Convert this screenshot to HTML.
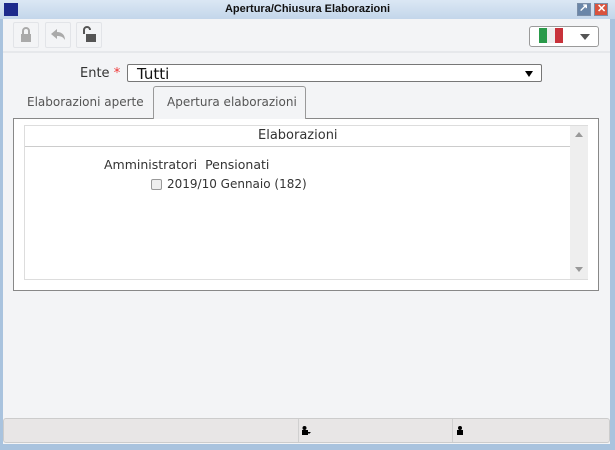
<!DOCTYPE html>
<html><head><meta charset="utf-8"><style>
*{margin:0;padding:0;box-sizing:border-box}
body{width:615px;height:450px;overflow:hidden;background:#a9c3de;font-family:"Liberation Sans","DejaVu Sans",sans-serif;position:relative}
.title{position:absolute;left:0;top:0;width:615px;height:19px;background:linear-gradient(#dbe7f4,#c3d6ea);font:bold 11px "Liberation Sans",sans-serif;color:#111;text-align:center;line-height:19px}
.logo{position:absolute;left:4px;top:3px;width:14px;height:13px;background:#1d2a8c}
.tb{position:absolute;top:3px;width:14px;height:13px;border:1px solid #7a8ea8}
.content{position:absolute;left:3px;top:19px;width:607px;height:425px;background:#f3f4f6}
.btn{position:absolute;top:3px;width:26px;height:26px;border:1px solid #e2e4e8;border-radius:2px;background:#f3f4f6}
.sep{position:absolute;left:0;top:32px;width:607px;height:2px;background:#e6e8eb}
.flag{position:absolute;left:526px;top:7px;width:70px;height:21px;border:1px solid #9a9a9a;border-radius:3px;background:#fff}
.txt{font-family:"DejaVu Sans","Liberation Sans",sans-serif;color:#333}
</style></head><body>
<div class="title"><div class="logo"></div>Apertura/Chiusura Elaborazioni
<div class="tb" style="left:577px;background:#6a86a8"></div>
<div class="tb" style="left:594px;background:#d9533e"></div>
<span style="position:absolute;left:579px;top:-1px;color:#fff;font-size:11px">↗</span>
<span style="position:absolute;left:597px;top:0;color:#fff;font-size:11px">✕</span>
</div>
<div class="content">
 <div class="btn" style="left:10px"><svg width="24" height="24"><rect x="7" y="11" width="10" height="8" fill="#aaa"/><path d="M9 11V8a3 3 0 0 1 6 0v3" stroke="#aaa" stroke-width="2" fill="none"/></svg></div>
 <div class="btn" style="left:42px"><svg width="24" height="24"><path d="M5 11l6-5v3c5 0 8 3 8 8c-2-3-4-4-8-4v3z" fill="#aaa"/></svg></div>
 <div class="btn" style="left:73px"><svg width="24" height="24"><rect x="9" y="11" width="10" height="8" fill="#555"/><path d="M7 11V7a3 3 0 0 1 6 0" stroke="#555" stroke-width="2" fill="none"/></svg></div>
 <div class="flag"><div style="position:absolute;left:9px;top:1px;width:8px;height:15px;background:#2a9a4a"></div><div style="position:absolute;left:17px;top:1px;width:8px;height:15px;background:#eee"></div><div style="position:absolute;left:25px;top:1px;width:8px;height:15px;background:#c8323a"></div><div style="position:absolute;left:50px;top:7px;border:5px solid transparent;border-top:6px solid #555;border-bottom:0"></div></div>
 <div class="sep"></div>
 <div class="txt" style="position:absolute;left:77px;top:47px;font-size:13px">Ente <span style="color:#e33">*</span></div>
 <div style="position:absolute;left:124px;top:45px;width:415px;height:18px;border:1px solid #777;border-radius:2px;background:#fff"><span class="txt" style="position:absolute;left:9px;top:0;font-size:15px;color:#111">Tutti</span><div style="position:absolute;left:397px;top:6px;border:4px solid transparent;border-top:6px solid #000;border-bottom:0"></div></div>
 <div class="txt" style="position:absolute;left:24px;top:76px;font-size:12px;color:#555">Elaborazioni aperte</div>
 <div style="position:absolute;left:150px;top:67px;width:153px;height:33px;border:1px solid #999;border-bottom:none;border-radius:3px 3px 0 0;background:#f3f4f6;z-index:2"><span class="txt" style="position:absolute;left:13px;top:8px;font-size:12px;color:#555">Apertura elaborazioni</span></div>
 <div style="position:absolute;left:10px;top:99px;width:586px;height:173px;border:1px solid #888;background:#fff">
  <div style="position:absolute;left:10px;top:6px;width:564px;height:155px;border:1px solid #ddd">
   <div style="position:absolute;left:0;top:0;width:545px;height:21px;border-bottom:1px solid #ccc"><span class="txt" style="position:absolute;left:233px;top:2px;font-size:13px;color:#333">Elaborazioni</span></div>
   <div style="position:absolute;left:545px;top:0;width:18px;height:153px;background:#eee"><div style="position:absolute;left:5px;top:6px;border:4px solid transparent;border-bottom:5px solid #999;border-top:0"></div><div style="position:absolute;left:5px;top:141px;border:4px solid transparent;border-top:5px solid #999;border-bottom:0"></div></div>
   <div class="txt" style="position:absolute;left:79px;top:31px;font-size:12.5px">Amministratori&nbsp; Pensionati</div>
   <div style="position:absolute;left:126px;top:53px;width:11px;height:11px;border:1px solid #999;border-radius:2px;background:#eee"></div>
   <div class="txt" style="position:absolute;left:142px;top:51px;font-size:12px">2019/10 Gennaio (182)</div>
  </div>
 </div>
 <div style="position:absolute;left:0;top:399px;width:607px;height:25px;border:1px solid #ccc;border-radius:3px;background:#e8e6e6">
  <div style="position:absolute;left:294px;top:0;width:1px;height:23px;background:#d0d0d0"></div>
  <div style="position:absolute;left:448px;top:0;width:1px;height:23px;background:#d0d0d0"></div>
  <svg style="position:absolute;left:297px;top:7px" width="10" height="10"><circle cx="3.5" cy="2" r="2" fill="#000"/><rect x="1" y="4" width="6" height="5" fill="#000"/><path d="M6 6h4l-2 2z" fill="#000"/></svg>
  <svg style="position:absolute;left:452px;top:7px" width="10" height="10"><circle cx="4" cy="2" r="2" fill="#000"/><rect x="1" y="4" width="6" height="5" fill="#000"/></svg>
 </div>
</div>
</body></html>
